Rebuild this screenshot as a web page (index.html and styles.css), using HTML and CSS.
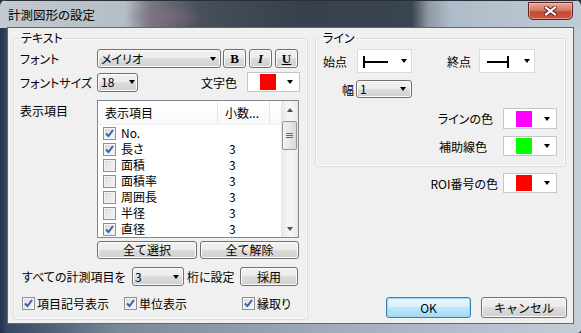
FILE: index.html
```html
<!DOCTYPE html>
<html lang="ja">
<head>
    <meta charset="UTF-8">
    <title>計測図形の設定</title>
    <link rel="stylesheet" href="styles.css">
</head>
<body>
    <div class="window">
        <div class="titlebar">
            <span class="title">計測図形の設定</span>
            <span class="close-btn">
                <svg width="13" height="10" viewBox="0 0 13 10"><path d="M2 1.5 L11 8.5 M11 1.5 L2 8.5" stroke="#5a1f1a" stroke-width="4" stroke-linecap="square"/><path d="M2 1.5 L11 8.5 M11 1.5 L2 8.5" stroke="#fff" stroke-width="2.2" stroke-linecap="square"/></svg>
            </span>
        </div>
        <div class="frame">
            <div class="client">
                <!-- テキスト -->
                <fieldset class="group group-text">
                    <legend>テキスト</legend>

                    <div class="row row-font">
                        <span class="lbl">フォント</span>
                        <div class="face combo combo-font"><span>メイリオ</span><i class="arrow"></i></div>
                        <button class="face style-btn bold">B</button>
                        <button class="face style-btn italic">I</button>
                        <button class="face style-btn under">U</button>
                    </div>

                    <div class="row row-size">
                        <span class="lbl">フォントサイズ</span>
                        <div class="face combo combo-size"><span>18</span><i class="arrow"></i></div>
                        <span class="lbl-color">文字色</span>
                        <div class="color-box"><span class="swatch red"></span><i class="arrow"></i></div>
                    </div>

                    <div class="row row-items">
                        <span class="lbl lbl-top">表示項目</span>
                        <div class="list">
                            <div class="list-main">
                                <div class="list-head">
                                    <span class="col-name">表示項目</span>
                                    <span class="col-val">小数...</span>
                                    <span class="col-rest"></span>
                                </div>
                                <div class="list-body">
                                    <div class="item"><span class="chk on"><svg width="11" height="11" viewBox="0 0 11 11"><path d="M2 5.5 L4.5 8 L9 2" fill="none" stroke="#3b5ea8" stroke-width="2"/></svg></span><span class="item-name">No.</span><span class="item-val"></span></div>
                                    <div class="item"><span class="chk on"><svg width="11" height="11" viewBox="0 0 11 11"><path d="M2 5.5 L4.5 8 L9 2" fill="none" stroke="#3b5ea8" stroke-width="2"/></svg></span><span class="item-name">長さ</span><span class="item-val">3</span></div>
                                    <div class="item"><span class="chk"></span><span class="item-name">面積</span><span class="item-val">3</span></div>
                                    <div class="item"><span class="chk"></span><span class="item-name">面積率</span><span class="item-val">3</span></div>
                                    <div class="item"><span class="chk"></span><span class="item-name">周囲長</span><span class="item-val">3</span></div>
                                    <div class="item"><span class="chk"></span><span class="item-name">半径</span><span class="item-val">3</span></div>
                                    <div class="item"><span class="chk on"><svg width="11" height="11" viewBox="0 0 11 11"><path d="M2 5.5 L4.5 8 L9 2" fill="none" stroke="#3b5ea8" stroke-width="2"/></svg></span><span class="item-name">直径</span><span class="item-val">3</span></div>
                                </div>
                            </div>
                            <div class="scrollbar">
                                <div class="sb-btn"><i class="sb-up"></i></div>
                                <div class="sb-thumb">
                                    <svg width="7" height="7" viewBox="0 0 7 7"><path d="M0 1.5 H7 M0 3.5 H7 M0 5.5 H7" stroke="#6a6a6a" stroke-width="1"/></svg>
                                </div>
                                <div class="sb-track"></div>
                                <div class="sb-btn"><i class="sb-down"></i></div>
                            </div>
                        </div>
                    </div>

                    <div class="row row-select">
                        <button class="face btn btn-all">全て選択</button>
                        <button class="face btn btn-none">全て解除</button>
                    </div>

                    <div class="row row-digits">
                        <span class="lbl-all">すべての計測項目を</span>
                        <div class="face combo combo-digits"><span>3</span><i class="arrow"></i></div>
                        <span class="lbl-keta">桁に設定</span>
                        <button class="face btn btn-apply">採用</button>
                    </div>

                    <div class="row row-checks">
                        <label class="check-item ci-1"><span class="chk on"><svg width="11" height="11" viewBox="0 0 11 11"><path d="M2 5.5 L4.5 8 L9 2" fill="none" stroke="#3b5ea8" stroke-width="2"/></svg></span>項目記号表示</label>
                        <label class="check-item ci-2"><span class="chk on"><svg width="11" height="11" viewBox="0 0 11 11"><path d="M2 5.5 L4.5 8 L9 2" fill="none" stroke="#3b5ea8" stroke-width="2"/></svg></span>単位表示</label>
                        <label class="check-item"><span class="chk on"><svg width="11" height="11" viewBox="0 0 11 11"><path d="M2 5.5 L4.5 8 L9 2" fill="none" stroke="#3b5ea8" stroke-width="2"/></svg></span>縁取り</label>
                    </div>
                </fieldset>

                <div class="right-col">
                    <!-- ライン -->
                    <fieldset class="group group-line">
                        <legend>ライン</legend>

                        <div class="row row-ends">
                            <span class="lbl-start">始点</span>
                            <div class="line-box">
                                <svg width="30" height="22" viewBox="0 0 30 22"><path d="M6 6 V18 M6 12 H30" stroke="#000" stroke-width="2" fill="none"/></svg>
                                <i class="arrow"></i>
                            </div>
                            <span class="lbl-end">終点</span>
                            <div class="line-box end">
                                <svg width="30" height="22" viewBox="0 0 30 22"><path d="M7 12 H28 M28 6 V18" stroke="#000" stroke-width="2" fill="none"/></svg>
                                <i class="arrow"></i>
                            </div>
                        </div>

                        <div class="row row-width">
                            <span class="lbl-width">幅</span>
                            <div class="face combo combo-width"><span>1</span><i class="arrow"></i></div>
                        </div>

                        <div class="row color-row row-linecolor">
                            <span class="lbl-line-color">ラインの色</span>
                            <div class="color-box"><span class="swatch magenta"></span><i class="arrow"></i></div>
                        </div>

                        <div class="row color-row row-aux">
                            <span class="lbl-aux">補助線色</span>
                            <div class="color-box"><span class="swatch green"></span><i class="arrow"></i></div>
                        </div>
                    </fieldset>

                    <div class="row color-row row-roi">
                        <span class="lbl-roi">ROI番号の色</span>
                        <div class="color-box"><span class="swatch red"></span><i class="arrow"></i></div>
                    </div>

                    <div class="dialog-btns">
                        <button class="face btn btn-ok">OK</button>
                        <button class="face btn btn-cancel">キャンセル</button>
                    </div>
                </div>
            </div>
        </div>
    </div>
</body>
</html>
```

FILE: styles.css
```css
* {
    box-sizing: border-box;
}
body {
    margin: 0;
    width: 581px;
    height: 333px;
    overflow: hidden;
    background-color: #2b3440;
    font-family: "Noto Sans CJK JP", sans-serif;
    font-size: 12px;
    font-feature-settings: "palt" 1;
    color: #000;
}
.window {
    width: 581px;
    height: 333px;
    display: flex;
    flex-direction: column;
    border-radius: 6px 6px 4px 4px;
    overflow: hidden;
    box-shadow: inset 0 0 0 1px rgba(0, 0, 0, 0.6);
}
.titlebar {
    height: 28px;
    flex: none;
    display: flex;
    justify-content: space-between;
    align-items: flex-start;
    padding: 0 8px;
    background:
        radial-gradient(ellipse 40px 12px at 165px 17px, rgba(150, 100, 130, 0.55), transparent),
        linear-gradient(90deg, #c3cad1 0px, #b5bdc5 125px, #737a83 150px, #464f5a 200px, #37414d 300px, #3a4552 412px, #8d98a3 428px, #aebbc8 450px, #bfcbd7 581px);
    box-shadow: inset 0 1px 0 #2b2f35;
}
.title {
    margin-top: 7px;
    line-height: 16px;
    font-size: 12.5px;
    color: #000;
}
.close-btn {
    width: 45px;
    height: 18px;
    margin-top: 2px;
    display: flex;
    align-items: center;
    justify-content: center;
    border: 1px solid #5d2620;
    border-radius: 0 0 5px 5px;
    background: linear-gradient(#e8a799 0%, #d87966 45%, #c44a36 55%, #c9573f 100%);
    box-shadow: inset 0 0 0 1px rgba(255, 210, 200, 0.5);
}
.frame {
    flex: 1;
    padding: 0 8px 10px;
    background: linear-gradient(90deg, #22344e 0, #34475f 7px, #7a8796 20%, #a3afbc 60%, #c3ced9 100%);
}
.client {
    height: 100%;
    display: flex;
    gap: 7px;
    padding: 3px 7px 3px 5px;
    background-color: #f0f0f0;
    box-shadow: 0 0 0 1px #5b6876;
}

/* group boxes */
.group {
    margin: 0;
    min-width: 0;
    border: 1px solid #d5dfe5;
    border-radius: 3px;
    box-shadow: inset 0 0 0 1px #fbfbfb;
}
.group legend {
    padding: 0 1px;
    line-height: 14px;
}
.group-text {
    width: 295px;
    height: 289px;
    flex: none;
    padding: 4px 7px 0 6px;
}
.row {
    display: flex;
    align-items: center;
}
.lbl {
    width: 77px;
    flex: none;
}
.lbl-top {
    align-self: flex-start;
    padding-top: 2px;
}

/* shared button face */
.face {
    border: 1px solid #707070;
    border-radius: 3px;
    background: linear-gradient(#f2f2f2 0%, #ebebeb 50%, #dddddd 50%, #cfcfcf 100%);
    box-shadow: inset 0 0 0 1px #fcfcfc;
    font-family: inherit;
    font-size: 12px;
    color: #000;
    padding: 0;
}
.combo {
    display: flex;
    align-items: center;
    justify-content: space-between;
    padding: 0 4px 0 3px;
    line-height: 14px;
}
.arrow {
    width: 0;
    height: 0;
    border-left: 3.5px solid transparent;
    border-right: 3.5px solid transparent;
    border-top: 4px solid #000;
}
.row-font {
    height: 19px;
}
.combo-font {
    width: 124px;
    height: 19px;
    margin-right: 2px;
}
.style-btn {
    width: 23px;
    height: 19px;
    margin-right: 3px;
    font-family: "Liberation Serif", serif;
    font-weight: bold;
    font-size: 13px;
    line-height: 16px;
}
.style-btn.italic {
    font-style: italic;
}
.style-btn.under {
    text-decoration: underline;
    margin-right: 0;
}
.row-size {
    height: 20px;
    margin-top: 4px;
}
.combo-size {
    width: 41px;
    height: 19px;
    padding-right: 2px;
}
.lbl-color {
    margin-left: auto;
    margin-right: 10px;
}
.color-box {
    width: 53px;
    height: 20px;
    flex: none;
    display: flex;
    align-items: center;
    justify-content: space-between;
    padding: 0 6px 0 12px;
    background-color: #fff;
    border: 1px solid #c6c6c6;
}
.swatch {
    width: 16px;
    height: 16px;
}
.red {
    background-color: #ff0000;
}
.magenta {
    background-color: #ff00ff;
}
.green {
    background-color: #00ff00;
}

/* list view */
.row-items {
    margin-top: 8px;
}
.list {
    width: 202px;
    height: 138px;
    display: flex;
    border: 1px solid #828790;
    background-color: #fff;
}
.list-main {
    flex: 1;
    overflow: hidden;
}
.list-head {
    height: 24px;
    display: flex;
    line-height: 23px;
    background: linear-gradient(#ffffff, #f7f8fa);
    border-bottom: 1px solid #f0f0f0;
}
.col-name {
    width: 120px;
    padding-left: 7px;
    border-right: 1px solid #e3e8ee;
}
.col-val {
    width: 52px;
    padding-left: 7px;
    border-right: 1px solid #e3e8ee;
}
.col-rest {
    flex: 1;
}
.list-body {
    height: 112px;
    overflow: hidden;
}
.item {
    height: 16px;
    display: flex;
    align-items: center;
    padding-left: 5px;
    line-height: 16px;
}
.chk {
    width: 13px;
    height: 13px;
    flex: none;
    display: flex;
    align-items: center;
    justify-content: center;
    border: 1px solid #8e8f8f;
    background: linear-gradient(135deg, #d8d8d8, #f8f8f8);
    box-shadow: inset 0 0 0 1px #f4f4f4;
}
.chk.on {
    background: linear-gradient(135deg, #d6dbe2, #f6f7f9);
}
.item .chk {
    margin-right: 5px;
}
.item-name {
    width: 97px;
}
.item-val {
    padding-left: 11px;
}
.scrollbar {
    width: 17px;
    flex: none;
    display: flex;
    flex-direction: column;
    background: linear-gradient(90deg, #e6e6e6, #f4f4f4 40%, #f4f4f4 70%, #e6e6e6);
}
.sb-btn {
    height: 17px;
    display: flex;
    align-items: center;
    justify-content: center;
}
.sb-up {
    border-left: 3.5px solid transparent;
    border-right: 3.5px solid transparent;
    border-bottom: 4px solid #4f4f4f;
}
.sb-down {
    border-left: 3.5px solid transparent;
    border-right: 3.5px solid transparent;
    border-top: 4px solid #4f4f4f;
}
.sb-thumb {
    height: 29px;
    margin: 3px 1px 0 1px;
    display: flex;
    align-items: center;
    justify-content: center;
    border: 1px solid #979797;
    border-radius: 2px;
    background: linear-gradient(90deg, #f3f3f3, #e6e6e6 50%, #d9d9d9);
}
.sb-track {
    flex: 1;
}

.btn {
    height: 18px;
    line-height: 14px;
}
.row-select {
    margin-top: 3px;
    margin-left: 77px;
    gap: 3px;
}
.btn-all {
    width: 100px;
}
.btn-none {
    width: 99px;
}
.row-digits {
    margin-top: 8px;
    height: 19px;
}
.lbl-all {
    width: 112px;
    padding-left: 2px;
}
.combo-digits {
    width: 52px;
    height: 19px;
    padding-left: 2px;
}
.lbl-keta {
    width: 56px;
    padding-left: 3px;
}
.btn-apply {
    width: 58px;
    height: 19px;
}
.row-checks {
    margin-top: 10px;
    height: 14px;
}
.check-item {
    display: flex;
    align-items: center;
    gap: 2px;
}
.ci-1 {
    width: 104px;
    padding-left: 2px;
}
.ci-2 {
    width: 118px;
}

/* right column */
.right-col {
    width: 251px;
    flex: none;
    display: flex;
    flex-direction: column;
}
.group-line {
    height: 136px;
    padding: 4px 8px 0 6px;
}
.row-ends {
    height: 24px;
}
.lbl-start {
    width: 35px;
    padding-left: 1px;
}
.line-box {
    width: 55px;
    height: 24px;
    display: flex;
    align-items: center;
    justify-content: space-between;
    padding-right: 4px;
    background-color: #fff;
    border: 1px solid #dadada;
}
.line-box.end {
    width: 56px;
}
.lbl-end {
    width: 32px;
    margin-left: 35px;
}
.row-width {
    height: 18px;
    margin-top: 7px;
}
.lbl-width {
    width: 34px;
    padding-left: 20px;
}
.combo-width {
    width: 56px;
    height: 18px;
    padding-right: 5px;
}
.color-row {
    justify-content: flex-end;
}
.color-row .color-box {
    width: 54px;
}
.row-linecolor {
    height: 21px;
    margin-top: 10px;
}
.row-linecolor .color-box {
    height: 21px;
}
.lbl-line-color {
    margin-right: 10px;
}
.row-aux {
    height: 20px;
    margin-top: 7px;
}
.lbl-aux {
    margin-right: 16px;
}
.row-roi {
    height: 20px;
    margin-top: 6px;
    padding-right: 9px;
}
.lbl-roi {
    margin-right: 5px;
}
.dialog-btns {
    margin-top: auto;
    margin-bottom: 2px;
    margin-right: -1px;
    display: flex;
    justify-content: flex-end;
    gap: 10px;
}
.btn-ok {
    width: 85px;
    height: 21px;
    border-color: #3c7fb1;
    box-shadow: inset 0 0 0 1px #9fd8f5;
    background: linear-gradient(#eaf6fd 0%, #d9f0fc 50%, #bee6fd 50%, #a7d9f5 100%);
}
.btn-cancel {
    width: 86px;
    height: 21px;
}
```
